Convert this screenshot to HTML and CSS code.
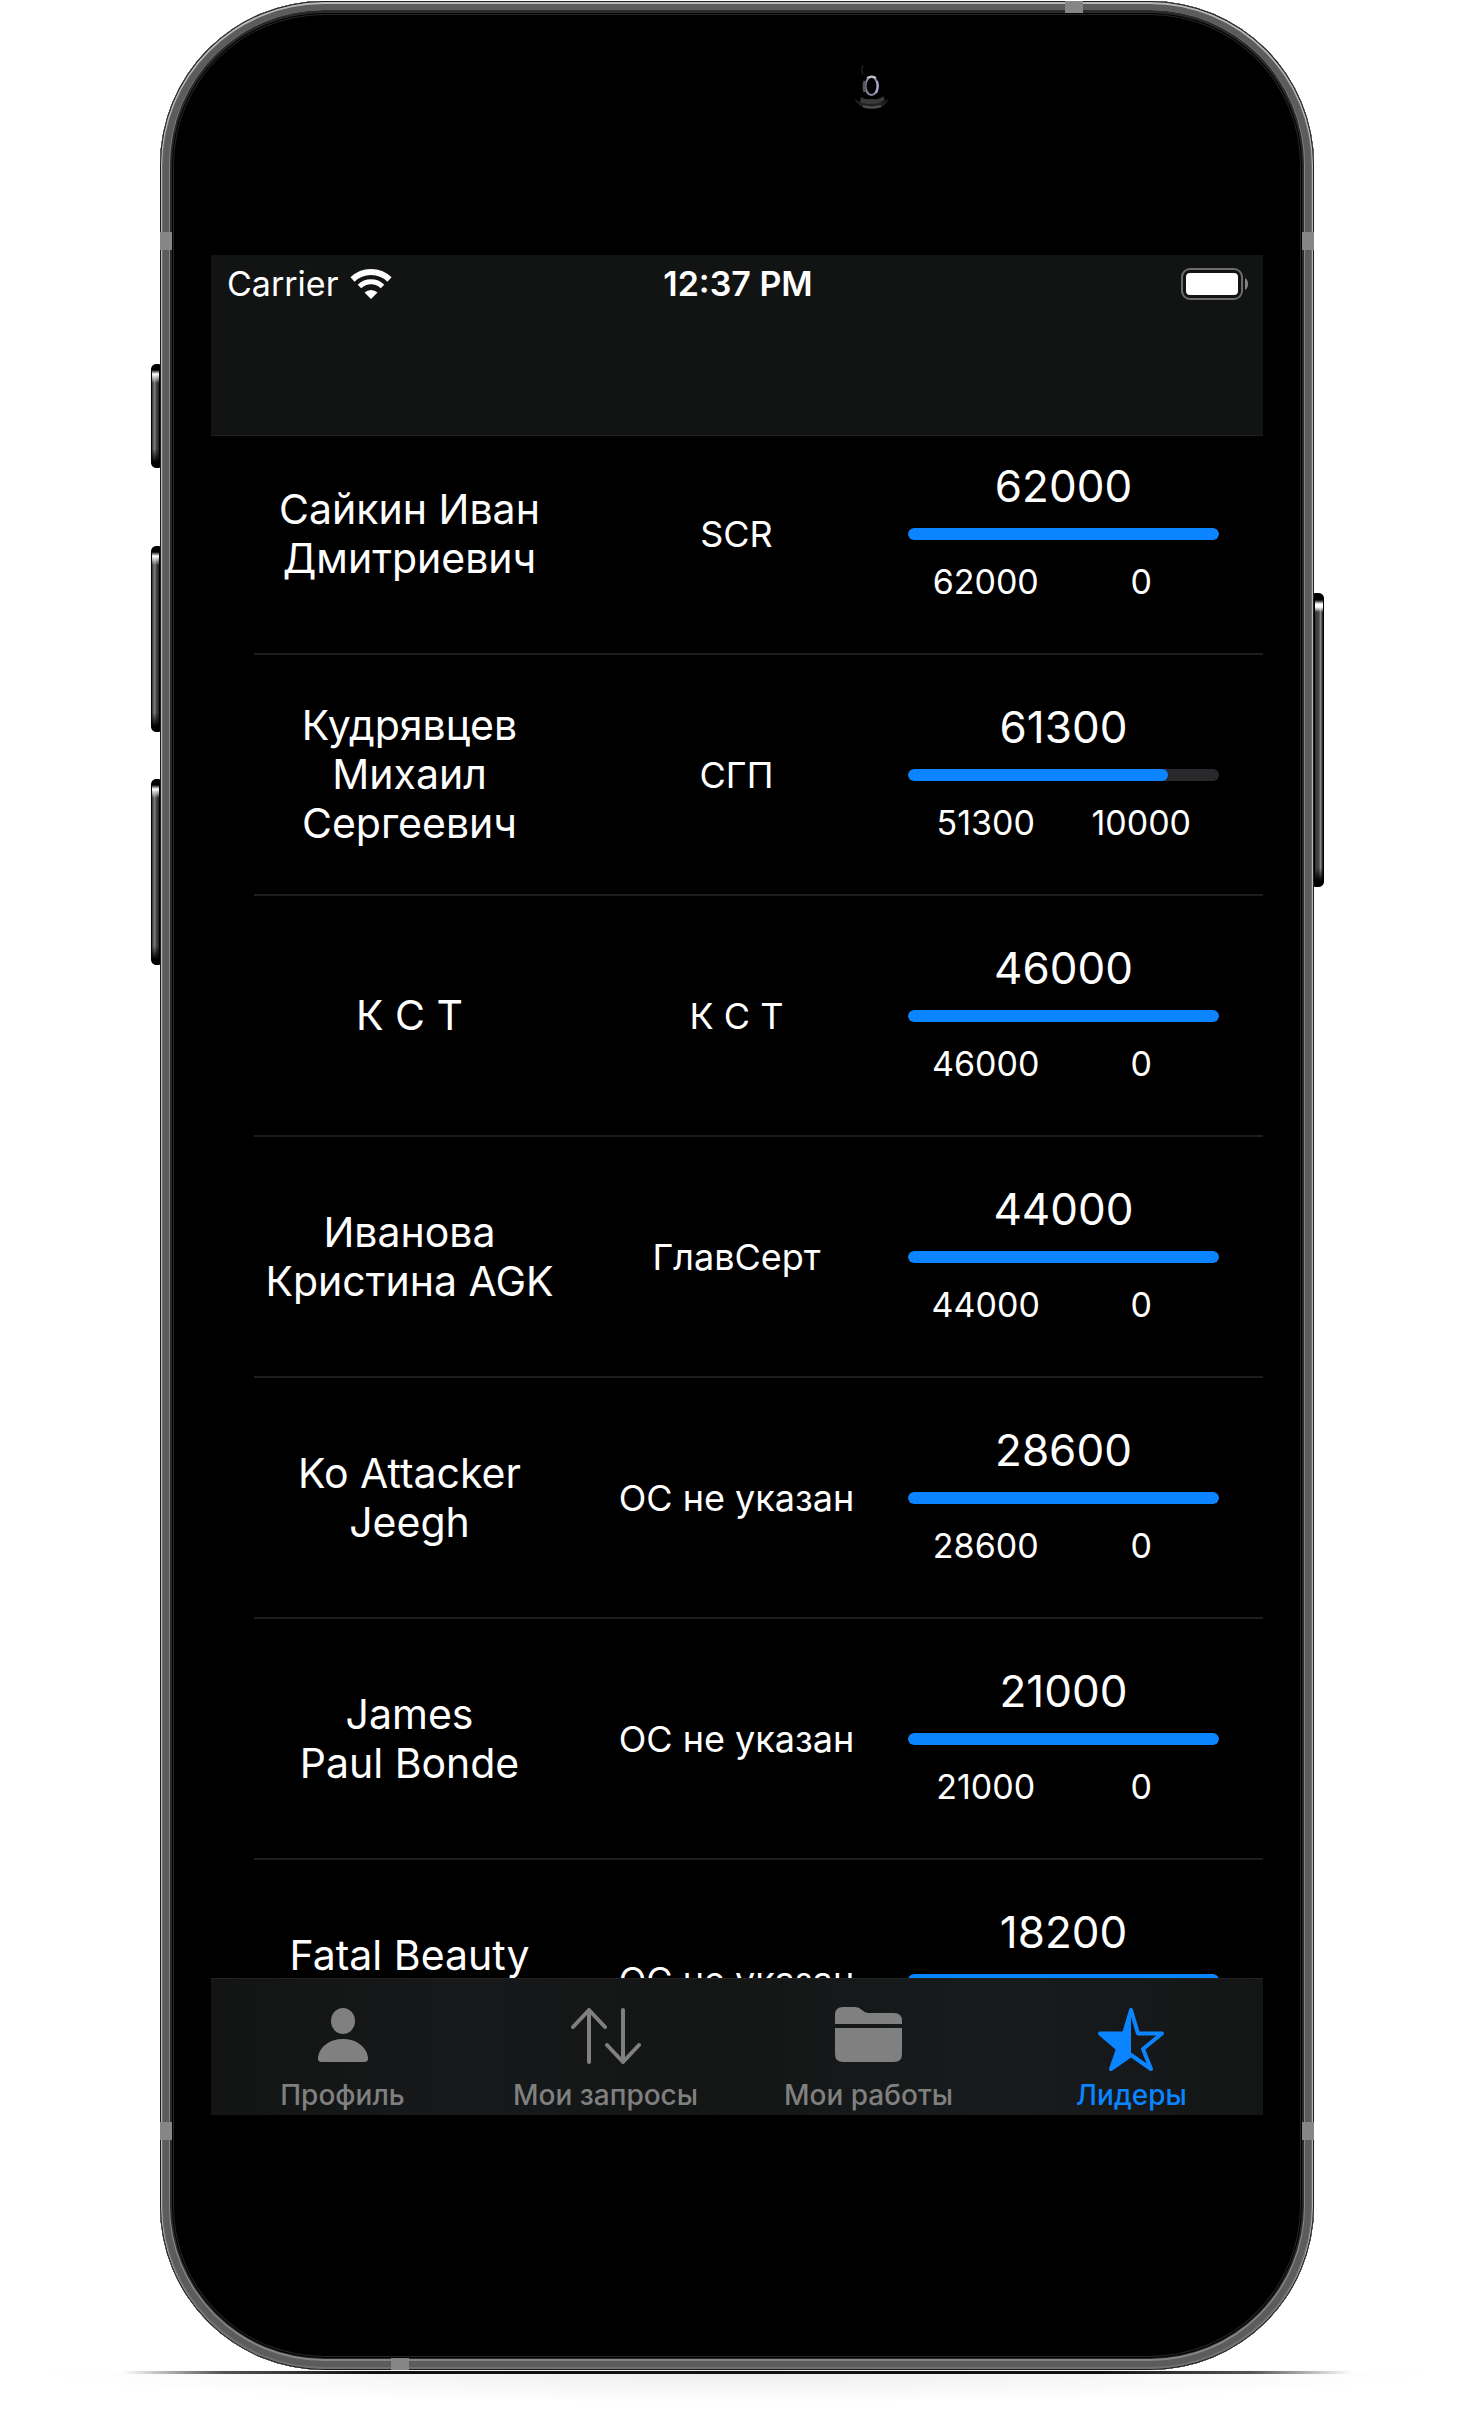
FILE: index.html
```html
<!DOCTYPE html>
<html lang="ru">
<head>
<meta charset="utf-8">
<meta name="viewport" content="width=device-width, initial-scale=1">
<title>Лидеры</title>
<link rel="stylesheet" href="styles.css">
</head>
<body>
<div class="stage">
  <div class="phone">
    <span class="key key-mute"></span>
    <span class="key key-up"></span>
    <span class="key key-down"></span>
    <span class="key key-power"></span>
    <span class="band band-top"></span>
    <span class="band band-left band-high"></span>
    <span class="band band-right band-high"></span>
    <span class="band band-left band-low"></span>
    <span class="band band-right band-low"></span>
    <span class="band band-bottom"></span>

    <div class="forehead">
      <svg class="camera" width="40" height="50" viewBox="0 0 40 50" aria-hidden="true">
        <path d="M11 2q-3 5 0 10" fill="none" stroke="#2a2a2c" stroke-width="1"/>
        <path d="M2 35q5 5 9 4h18q5 0 8-4-3 8-10 10-8 2-15 0Q5 42 2 35z" fill="#202122"/>
        <path d="M9 34q4 3 11 2 7 1 11-3l2 4q-6 4-13 4-8 0-12-2z" fill="#39393a"/>
        <path d="M11 43q8 3 18 0" fill="none" stroke="#505052" stroke-width="2"/>
        <ellipse cx="19.500" cy="23" rx="6" ry="9" fill="#000" stroke="#8b84a8" stroke-width="2"/>
        <path d="M15 15q5-3 9 0" fill="none" stroke="#c9c8d2" stroke-width="2"/>
        <path d="M25 18q2 6-1 12" fill="none" stroke="#b5a8dc" stroke-width="2"/>
        <path d="M13 18q-2 5 0 11" fill="none" stroke="#55555a" stroke-width="3"/>
      </svg>
    </div>

    <main class="screen">
      <header class="topbar">
        <div class="status">
          <div class="carrier">
            <span>Carrier</span>
            <svg width="42" height="32" viewBox="0 0 42 32" role="img" aria-label="Wi-Fi">
              <g fill="none" stroke="#fff">
                <path d="M2.500 11.500a26.500 26.500 0 0 1 37 0" stroke-width="6"/>
                <path d="M9.500 18.500a16.500 16.500 0 0 1 23 0" stroke-width="5"/>
              </g>
              <path d="M21 31l-6.500-6.500a9.500 9.500 0 0 1 13 0z" fill="#fff"/>
            </svg>
          </div>
          <time>12:37 PM</time>
          <svg class="battery" width="68" height="32" viewBox="0 0 68 32" role="img" aria-label="Батарея заряжена">
            <rect x="1" y="1" width="60" height="30" rx="8" fill="#121413" stroke="#6c6c6c" stroke-width="2"/>
            <rect x="5" y="5" width="52" height="22" rx="4" fill="#fff"/>
            <path d="M64 10q3 2 3 6t-3 6z" fill="#858585"/>
          </svg>
        </div>
      </header>

      <div class="scroll">
        <table class="leaders">
          <tbody>
            <tr>
              <td class="name">Сайкин Иван Дмитриевич</td>
              <td class="org">SCR</td>
              <td class="score"><span class="total">62000</span><progress value="62000" max="62000" aria-label="Доля баллов"></progress><span class="parts"><span>62000</span><span>0</span></span></td>
            </tr>
            <tr>
              <td class="name">Кудрявцев Михаил Сергеевич</td>
              <td class="org">СГП</td>
              <td class="score"><span class="total">61300</span><progress value="51300" max="61300" aria-label="Доля баллов"></progress><span class="parts"><span>51300</span><span>10000</span></span></td>
            </tr>
            <tr>
              <td class="name">К С Т</td>
              <td class="org">К С Т</td>
              <td class="score"><span class="total">46000</span><progress value="46000" max="46000" aria-label="Доля баллов"></progress><span class="parts"><span>46000</span><span>0</span></span></td>
            </tr>
            <tr>
              <td class="name">Иванова Кристина AGK</td>
              <td class="org">ГлавСерт</td>
              <td class="score"><span class="total">44000</span><progress value="44000" max="44000" aria-label="Доля баллов"></progress><span class="parts"><span>44000</span><span>0</span></span></td>
            </tr>
            <tr>
              <td class="name">Ko Attacker Jeegh</td>
              <td class="org">ОС не указан</td>
              <td class="score"><span class="total">28600</span><progress value="28600" max="28600" aria-label="Доля баллов"></progress><span class="parts"><span>28600</span><span>0</span></span></td>
            </tr>
            <tr>
              <td class="name">James<br>Paul Bonde</td>
              <td class="org">ОС не указан</td>
              <td class="score"><span class="total">21000</span><progress value="21000" max="21000" aria-label="Доля баллов"></progress><span class="parts"><span>21000</span><span>0</span></span></td>
            </tr>
            <tr>
              <td class="name">Fatal Beauty<br>&nbsp;</td>
              <td class="org">ОС не указан</td>
              <td class="score"><span class="total">18200</span><progress value="18200" max="18200" aria-label="Доля баллов"></progress></td>
            </tr>
          </tbody>
        </table>
      </div>

      <nav class="tabs">
        <a href="#profile">
          <svg width="70" height="66" viewBox="0 0 70 66" aria-hidden="true" fill="currentColor">
            <ellipse cx="35" cy="14" rx="12" ry="13"/>
            <path d="M10 50C12 39 22 32 35 32s23 7 25 18q1 5-4 5H14q-5 0-4-5z"/>
          </svg>
          <span>Профиль</span>
        </a>
        <a href="#requests">
          <svg width="70" height="66" viewBox="0 0 70 66" aria-hidden="true" fill="none" stroke="currentColor" stroke-width="4" stroke-linecap="round" stroke-linejoin="round">
            <path d="M18 55V3M2 20L18 3l16 17M52 3v52M36 38l16 17 16-17"/>
          </svg>
          <span>Мои запросы</span>
        </a>
        <a href="#works">
          <svg width="70" height="66" viewBox="0 0 70 66" aria-hidden="true" fill="currentColor">
            <path d="M1 17V8q0-8 8-8h12q4 0 7 3 3 3 6 3h26q8 0 8 8v3zM1 21h67v26q0 8-8 8H9q-8 0-8-8z"/>
          </svg>
          <span>Мои работы</span>
        </a>
        <a href="#leaders" class="active" aria-current="page">
          <svg width="70" height="66" viewBox="0 0 70 66" aria-hidden="true">
            <path d="M34 4L27 26H4L21 41 15 62 34 49z" fill="currentColor"/>
            <path d="M34 3L41 26.500H65L46 42 54 62 34 48 14 62 21 42 3 26.500H27z" fill="none" stroke="currentColor" stroke-width="4" stroke-linejoin="round"/>
          </svg>
          <span>Лидеры</span>
        </a>
      </nav>
    </main>
  </div>
  <div class="ground"></div>
</div>
</body>
</html>
```
FILE: styles.css
```css
* {
  box-sizing: border-box;
}

body {
  margin: 0;
  background: #fff;
  color: #fff;
  font-family: Inter, "Liberation Sans", sans-serif;
}

.stage {
  padding: 1px 166px 0 160px;
}

/* Phone body */
.phone {
  position: relative;
  display: flex;
  flex-direction: column;
  aspect-ratio: 1154 / 2369;
  min-height: 0;
  padding: 0 51px;
  border-radius: 164px;
  background: #000;
  box-shadow:
    inset 0 0 0 1px #1c1c1c,
    inset 0 1px 0 2px #b8b8b8,
    inset 0 0 0 3px #707070,
    inset 0 0 0 9px #5c5c5c,
    inset 0 -1px 0 10px #868686,
    inset 0 0 0 12px #2a2a2a,
    inset 0 0 0 13px #000,
    inset 0 0 0 14px #262626;
}

.key {
  position: absolute;
  width: 9px;
  border: 1px solid #000;
  background: linear-gradient(#000 0 5px, #fff 9px, transparent 18px calc(100% - 18px), #000 calc(100% - 5px)),
    linear-gradient(90deg, #333, #7d7d7d 40%, #4a4a4a 60%, #222);
}

.key-mute,
.key-up,
.key-down {
  right: 100%;
  border-radius: 5px 0 0 5px;
}

.key-mute {
  top: 363px;
  height: 104px;
}

.key-up {
  top: 545px;
  height: 186px;
}

.key-down {
  top: 778px;
  height: 186px;
}

.key-power {
  top: 592px;
  left: 100%;
  width: 10px;
  height: 294px;
  border-radius: 0 5px 5px 0;
  background: linear-gradient(#000 0 6px, #fff 10px 13px, transparent 18px calc(100% - 18px), #000 calc(100% - 5px)),
    linear-gradient(90deg, #333, #4a4a4a 50%, #8a8a8a 70%, #111);
}

.band {
  position: absolute;
  width: 12px;
  height: 18px;
  background: #868686;
}

.band-left {
  left: 0;
}

.band-right {
  right: 0;
}

.band-high {
  top: 231px;
}

.band-low {
  bottom: 230px;
}

.band-top,
.band-bottom {
  width: 18px;
  height: 12px;
}

.band-top {
  top: 0;
  right: 231px;
}

.band-bottom {
  bottom: 0;
  left: 231px;
}

.forehead {
  display: flex;
  justify-content: center;
  height: 254px;
  padding: 62px 0 0 270px;
}

.ground {
  height: 40px;
  margin: 0 -120px;
  background:
    linear-gradient(90deg, transparent 6%, #555 13%, #111 24% 76%, #555 87%, transparent 94%) 0 1px / 100% 3px no-repeat,
    radial-gradient(ellipse 50% 30px at 50% 3px, #eee, transparent);
}

/* App screen */
.screen {
  display: flex;
  flex: 1;
  flex-direction: column;
  min-height: 0;
  margin-bottom: 255px;
}

.topbar {
  z-index: 1;
  flex: none;
  height: 181px;
  border-bottom: 1px solid #1f2120;
  background: #121413;
}

.status {
  display: grid;
  grid-template-columns: 1fr auto 1fr;
  align-items: center;
  height: 58px;
  padding: 0 14px 0 16px;
  font-size: 34px;
  line-height: 40px;
}

.carrier {
  display: flex;
  align-items: center;
  gap: 12px;
}

.status time {
  font-weight: 600;
}

.battery {
  justify-self: end;
}

.scroll {
  flex: 1;
  min-height: 0;
  margin-top: -22px;
  padding-left: 43px;
  overflow: hidden;
}

.leaders,
.leaders tbody {
  display: block;
}

.leaders tr {
  display: grid;
  grid-template-columns: repeat(3, 1fr);
  gap: 16px;
  align-items: center;
  min-height: 241px;
  padding-right: 44px;
  border-bottom: 2px solid #1c1d1d;
}

.leaders td {
  min-width: 0;
  padding: 0;
  text-align: center;
}

.name {
  font-size: 41px;
  line-height: 49px;
}

.org {
  font-size: 36px;
  line-height: 40px;
}

.score {
  display: flex;
  flex-direction: column;
  align-self: start;
  gap: 14px;
}

.leaders .score {
  padding-top: 44px;
}

.total {
  font-size: 44px;
  line-height: 56px;
}

.parts {
  display: grid;
  grid-template-columns: 1fr 1fr;
  font-size: 34px;
  line-height: 56px;
}

progress {
  display: block;
  width: 100%;
  height: 12px;
  border: 0;
  border-radius: 6px;
  overflow: hidden;
  background: #29292b;
  appearance: none;
}

progress::-webkit-progress-bar {
  background: #29292b;
}

progress::-webkit-progress-value {
  border-radius: 6px;
  background: #0a84ff;
}

/* Tab bar */
.tabs {
  display: grid;
  flex: none;
  grid-template-columns: repeat(4, 1fr);
  border-top: 1px solid #222423;
  background: linear-gradient(90deg, #131514, #17181a 24%, #141615 48%, #181b1e 75%, #141615);
}

.tabs a {
  display: flex;
  flex-direction: column;
  align-items: center;
  gap: 6px;
  padding: 28px 0 4px;
  color: #7f807f;
  font-size: 28px;
  font-weight: 500;
  line-height: 32px;
  text-decoration: none;
}

.tabs .active {
  color: #0a84ff;
}
```
